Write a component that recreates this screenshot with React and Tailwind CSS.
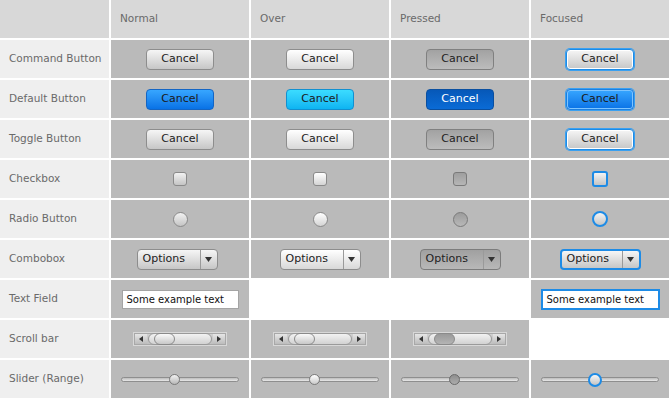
import React from "react";

const font = { fontFamily: '"DejaVu Sans", Verdana, sans-serif' };

// Button looks per state
const buttonStyles = {
  command: {
    normal: "border border-[#8d8d8d] bg-linear-to-b from-[#f6f6f6] to-[#c6c6c6] text-[#222]",
    over: "border border-[#8d8d8d] bg-linear-to-b from-[#ffffff] to-[#d8d8d8] text-[#222]",
    pressed: "border border-[#808080] bg-linear-to-b from-[#a2a2a2] to-[#bcbcbc] text-[#222]",
    focused: "border border-[#1d8be6] shadow-[0_0_0_1px_#3aa0f0,inset_0_0_0_1px_#ffffff] bg-linear-to-b from-[#f6f6f6] to-[#c6c6c6] text-[#222]",
  },
  default: {
    normal: "border border-[#1465c4] bg-linear-to-b from-[#37a6ff] to-[#0872e6] text-[#1a1a1a]",
    over: "border border-[#1290d0] bg-linear-to-b from-[#3bdcff] to-[#0cb4f2] text-[#1a1a1a]",
    pressed: "border border-[#0a4fa0] bg-linear-to-b from-[#0758b8] to-[#0a6bd6] text-white",
    focused: "border border-[#1d7fe0] shadow-[0_0_0_1px_#3aa0f0,inset_0_0_0_1px_#7cc4ff] bg-linear-to-b from-[#37a6ff] to-[#0872e6] text-[#1a1a1a]",
  },
};

const states = ["normal", "over", "pressed", "focused"];

function Cell({ children, className = "" }) {
  return (
    <div className={"bg-[#bababa] flex items-center justify-center " + className}>
      {children}
    </div>
  );
}

function Label({ children }) {
  return (
    <div className="bg-[#efefef] flex items-center pl-[9px] text-[10.5px] text-[#6a6a6a]">
      {children}
    </div>
  );
}

function Button({ kind, state }) {
  return (
    <div
      className={
        "w-[68px] h-[21px] rounded-[4px] flex items-center justify-center text-[11px] " +
        buttonStyles[kind][state]
      }
    >
      Cancel
    </div>
  );
}

function Checkbox({ state }) {
  const cls = {
    normal: "w-[14px] h-[14px] border border-[#8a8a8a] bg-linear-to-b from-[#f2f2f2] to-[#c4c4c4]",
    over: "w-[14px] h-[14px] border border-[#8a8a8a] bg-linear-to-b from-[#ffffff] to-[#d4d4d4]",
    pressed: "w-[14px] h-[14px] border border-[#7a7a7a] bg-linear-to-b from-[#9e9e9e] to-[#b6b6b6]",
    focused: "w-[16px] h-[16px] border-2 border-[#1d8be6] bg-linear-to-b from-[#f4f4f4] to-[#c4c4c4]",
  }[state];
  return <div className={"rounded-[3px] " + cls} />;
}

function Radio({ state }) {
  const cls = {
    normal: "w-[15px] h-[15px] border border-[#8a8a8a] bg-linear-to-b from-[#f2f2f2] to-[#c4c4c4]",
    over: "w-[15px] h-[15px] border border-[#8a8a8a] bg-linear-to-b from-[#ffffff] to-[#d4d4d4]",
    pressed: "w-[15px] h-[15px] border border-[#7a7a7a] bg-linear-to-b from-[#9c9c9c] to-[#b8b8b8]",
    focused: "w-[16px] h-[16px] border-2 border-[#1d8be6] bg-linear-to-b from-[#f4f4f4] to-[#c4c4c4]",
  }[state];
  return <div className={"rounded-full " + cls} />;
}

function Combo({ state }) {
  const cls = {
    normal: "border border-[#8d8d8d] bg-linear-to-b from-[#f6f6f6] to-[#c6c6c6]",
    over: "border border-[#8d8d8d] bg-linear-to-b from-[#ffffff] to-[#d8d8d8]",
    pressed: "border border-[#7c7c7c] bg-linear-to-b from-[#a0a0a0] to-[#b8b8b8]",
    focused: "border-2 border-[#1d8be6] bg-linear-to-b from-[#f6f6f6] to-[#c6c6c6]",
  }[state];
  return (
    <div className={"w-[81px] h-[21px] rounded-[4px] flex items-center text-[11px] text-[#222] " + cls}>
      <span className="flex-1 pl-[5px]">Options</span>
      <span className="w-[17px] h-full border-l border-[#9a9a9a] flex items-center justify-center">
        <svg width="7" height="5" viewBox="0 0 7 5">
          <path d="M0 0 L7 0 L3.5 5 Z" fill="#333" />
        </svg>
      </span>
    </div>
  );
}

function TextField({ focused }) {
  return (
    <div
      className={
        "bg-white flex items-center pl-[4px] text-[10px] text-[#111] " +
        (focused ? "w-[119px] h-[21px] border-2 border-[#1d8be6]" : "w-[117px] h-[19px] border border-[#a4a4a4]")
      }
    >
      Some example text
    </div>
  );
}

function ScrollBar({ pressed }) {
  return (
    <div className="w-[94px] h-[14px] border border-[#d8d8d8] bg-[#a8a8a8] p-px flex items-center">
      <div className="w-[12px] h-full bg-linear-to-b from-[#e6e6e6] to-[#bcbcbc] flex items-center justify-center">
        <svg width="4" height="6" viewBox="0 0 4 6">
          <path d="M4 0 L4 6 L0 3 Z" fill="#333" />
        </svg>
      </div>
      <div className="flex-1 h-full bg-linear-to-b from-[#d0d0d0] to-[#c0c0c0] flex items-center px-[1px]">
        <div className="relative w-full h-[12px] rounded-full border border-[#9a9a9a] bg-linear-to-b from-[#f2f2f2] to-[#d2d2d2]">
          <div
            className={
              "absolute left-[5px] top-[-1px] w-[21px] h-[12px] rounded-full border border-[#8a8a8a] " +
              (pressed
                ? "bg-linear-to-b from-[#9a9a9a] to-[#b4b4b4]"
                : "bg-linear-to-b from-[#fafafa] to-[#c8c8c8]")
            }
          />
        </div>
      </div>
      <div className="w-[12px] h-full bg-linear-to-b from-[#e6e6e6] to-[#bcbcbc] flex items-center justify-center">
        <svg width="4" height="6" viewBox="0 0 4 6">
          <path d="M0 0 L0 6 L4 3 Z" fill="#333" />
        </svg>
      </div>
    </div>
  );
}

function Slider({ state }) {
  const thumb = {
    normal: "w-[11px] h-[11px] border border-[#7a7a7a] bg-linear-to-b from-[#f2f2f2] to-[#b8b8b8] left-[47px] top-[-4px]",
    over: "w-[11px] h-[11px] border border-[#7a7a7a] bg-linear-to-b from-[#ffffff] to-[#cacaca] left-[47px] top-[-4px]",
    pressed: "w-[11px] h-[11px] border border-[#6a6a6a] bg-linear-to-b from-[#8e8e8e] to-[#acacac] left-[47px] top-[-4px]",
    focused: "w-[14px] h-[14px] border-2 border-[#1d8be6] bg-linear-to-b from-[#f6f6f6] to-[#c4c4c4] left-[46px] top-[-5px]",
  }[state];
  return (
    <div className="relative w-[118px] h-[5px] rounded-full border border-[#8e8e8e] bg-linear-to-b from-[#bdbdbd] to-[#e8e8e8]">
      <div className={"absolute rounded-full " + thumb} />
    </div>
  );
}

export default function App() {
  return (
    <div
      className="w-[669px] h-[398px] bg-white grid grid-cols-[109px_138px_138px_138px_138px] grid-rows-[38px_repeat(9,38px)] gap-[2px] overflow-hidden"
      style={font}
    >
      {/* Header row */}
      <div className="bg-[#d8d8d8]" />
      {["Normal", "Over", "Pressed", "Focused"].map((h) => (
        <div key={h} className="bg-[#d8d8d8] flex items-center pl-[9px] text-[10.5px] text-[#6a6a6a]">
          {h}
        </div>
      ))}

      <Label>Command Button</Label>
      {states.map((s) => (
        <Cell key={s}>
          <Button kind="command" state={s} />
        </Cell>
      ))}

      <Label>Default Button</Label>
      {states.map((s) => (
        <Cell key={s}>
          <Button kind="default" state={s} />
        </Cell>
      ))}

      <Label>Toggle Button</Label>
      {states.map((s) => (
        <Cell key={s}>
          <Button kind="command" state={s} />
        </Cell>
      ))}

      <Label>Checkbox</Label>
      {states.map((s) => (
        <Cell key={s}>
          <Checkbox state={s} />
        </Cell>
      ))}

      <Label>Radio Button</Label>
      {states.map((s) => (
        <Cell key={s}>
          <Radio state={s} />
        </Cell>
      ))}

      <Label>Combobox</Label>
      {states.map((s) => (
        <Cell key={s} className={s === "normal" ? "pr-[6px]" : ""}>
          <Combo state={s} />
        </Cell>
      ))}

      <Label>Text Field</Label>
      <Cell>
        <TextField />
      </Cell>
      <div className="bg-white" />
      <div className="bg-white" />
      <Cell>
        <TextField focused />
      </Cell>

      <Label>Scroll bar</Label>
      <Cell>
        <ScrollBar />
      </Cell>
      <Cell>
        <ScrollBar />
      </Cell>
      <Cell>
        <ScrollBar pressed />
      </Cell>
      <div className="bg-white" />

      <Label>Slider (Range)</Label>
      {states.map((s) => (
        <Cell key={s}>
          <Slider state={s} />
        </Cell>
      ))}
    </div>
  );
}
